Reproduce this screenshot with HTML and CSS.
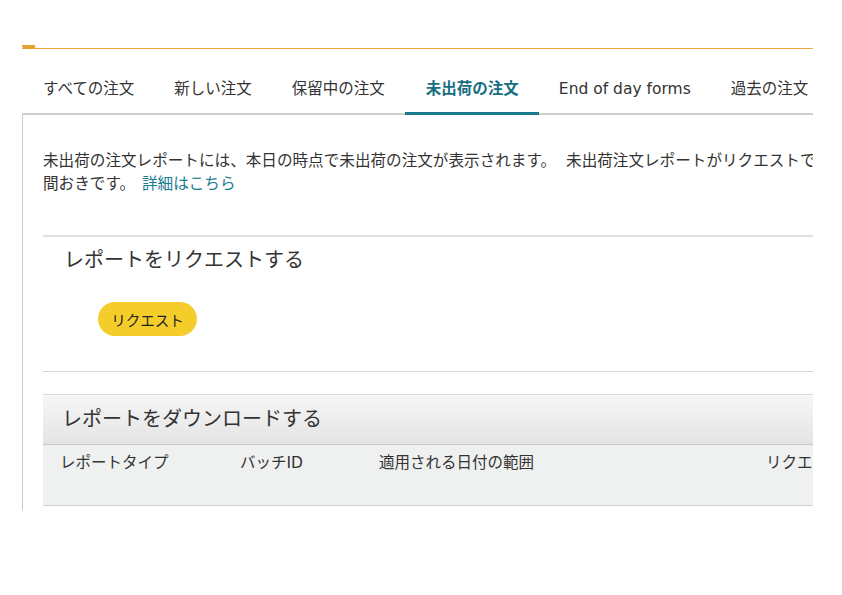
FILE: index.html
```html
<!DOCTYPE html>
<html lang="ja">
<head>
<meta charset="utf-8">
<title>未出荷の注文</title>
<link rel="stylesheet" href="styles.css">
</head>
<body>
<div class="frame">
  <div class="topbar"></div>
  <nav class="tabs">
    <a class="tab">すべての注文</a>
    <a class="tab">新しい注文</a>
    <a class="tab">保留中の注文</a>
    <a class="tab active">未出荷の注文</a>
    <a class="tab">End of day forms</a>
    <a class="tab">過去の注文</a>
  </nav>
  <main class="panel">
    <p class="intro">未出荷の注文レポートには、本日の時点で未出荷の注文が表示されます。<span class="gap"></span>未出荷注文レポートがリクエストできるのは、4時<br>間おきです。 <a class="link">詳細はこちら</a></p>
    <section class="request">
      <h2 class="section-title">レポートをリクエストする</h2>
      <button class="btn-request">リクエスト</button>
    </section>
    <div class="divider"></div>
    <section class="download">
      <h2 class="download-head">レポートをダウンロードする</h2>
      <div class="download-row">
        <span>レポートタイプ</span>
        <span>バッチID</span>
        <span>適用される日付の範囲</span>
        <span>リクエスト日</span>
      </div>
    </section>
  </main>
</div>
</body>
</html>
```
FILE: styles.css
```css
html, body {
  margin: 0;
  padding: 0;
  background: #fff;
}
body {
  font-family: "DejaVu Sans", "Noto Sans CJK JP", sans-serif;
  color: #333;
}
.frame {
  margin-left: 22px;
  width: 791px;
  overflow: hidden;
}
.topbar {
  position: relative;
  height: 48px;
  border-bottom: 1px solid #f2a93b;
}
.topbar::before {
  content: "";
  position: absolute;
  left: 0;
  bottom: -1px;
  width: 13px;
  height: 4px;
  background: #e9a132;
  border-bottom-left-radius: 4px;
}
.tabs {
  display: flex;
  margin-top: 17px;
  border-bottom: 2px solid #cfcfcf;
  height: 47px;
}
.tab {
  display: block;
  padding: 0 20px;
  height: 46px;
  line-height: 46px;
  font-size: 15.5px;
  color: #333;
  border-bottom: 3px solid transparent;
  white-space: nowrap;
  cursor: pointer;
}
.tabs .tab:first-child {
  padding-left: 21px;
}
.tab.active {
  color: #166f80;
  font-weight: bold;
  border-bottom-color: #19788a;
  padding-left: 21px;
}
.panel {
  border-left: 1px solid #c8c8c8;
  padding: 35px 0 4px 20px;
  overflow: hidden;
}
.intro {
  margin: 0;
  font-size: 15.6px;
  line-height: 23px;
  white-space: nowrap;
  color: #333;
}
.gap {
  display: inline-block;
  width: 10px;
}
.link {
  color: #1c7d90;
  margin-left: 2px;
  cursor: pointer;
}
.request {
  margin-top: 39px;
  border-top: 2px solid #e0e0e0;
  padding: 9px 0 35px;
}
.section-title {
  margin: 0 0 28px 21px;
  font-size: 20px;
  line-height: 28px;
  font-weight: normal;
  color: #333;
}
.btn-request {
  display: block;
  margin-left: 55px;
  width: 99px;
  height: 34px;
  border: none;
  border-radius: 17px;
  background: #f4cd2b;
  color: #222;
  font-family: inherit;
  font-size: 14.5px;
  cursor: pointer;
}
.divider {
  border-top: 1px solid #d6d6d6;
}
.download {
  margin-top: 22px;
  border-top: 1px solid #dcdcdc;
}
.download-head {
  margin: 0;
  height: 49px;
  line-height: 48px;
  padding-left: 19px;
  font-size: 20px;
  font-weight: normal;
  color: #333;
  background: linear-gradient(#f6f6f6, #e4e4e4);
  border-bottom: 1px solid #c9c9c9;
}
.download-row {
  display: grid;
  grid-template-columns: 180px 139px 387px auto;
  padding: 7px 0 0 17px;
  height: 53px;
  background: #eff0f0;
  border-bottom: 1px solid #cfcfcf;
  font-size: 15.5px;
  line-height: 22px;
  white-space: nowrap;
}
```
